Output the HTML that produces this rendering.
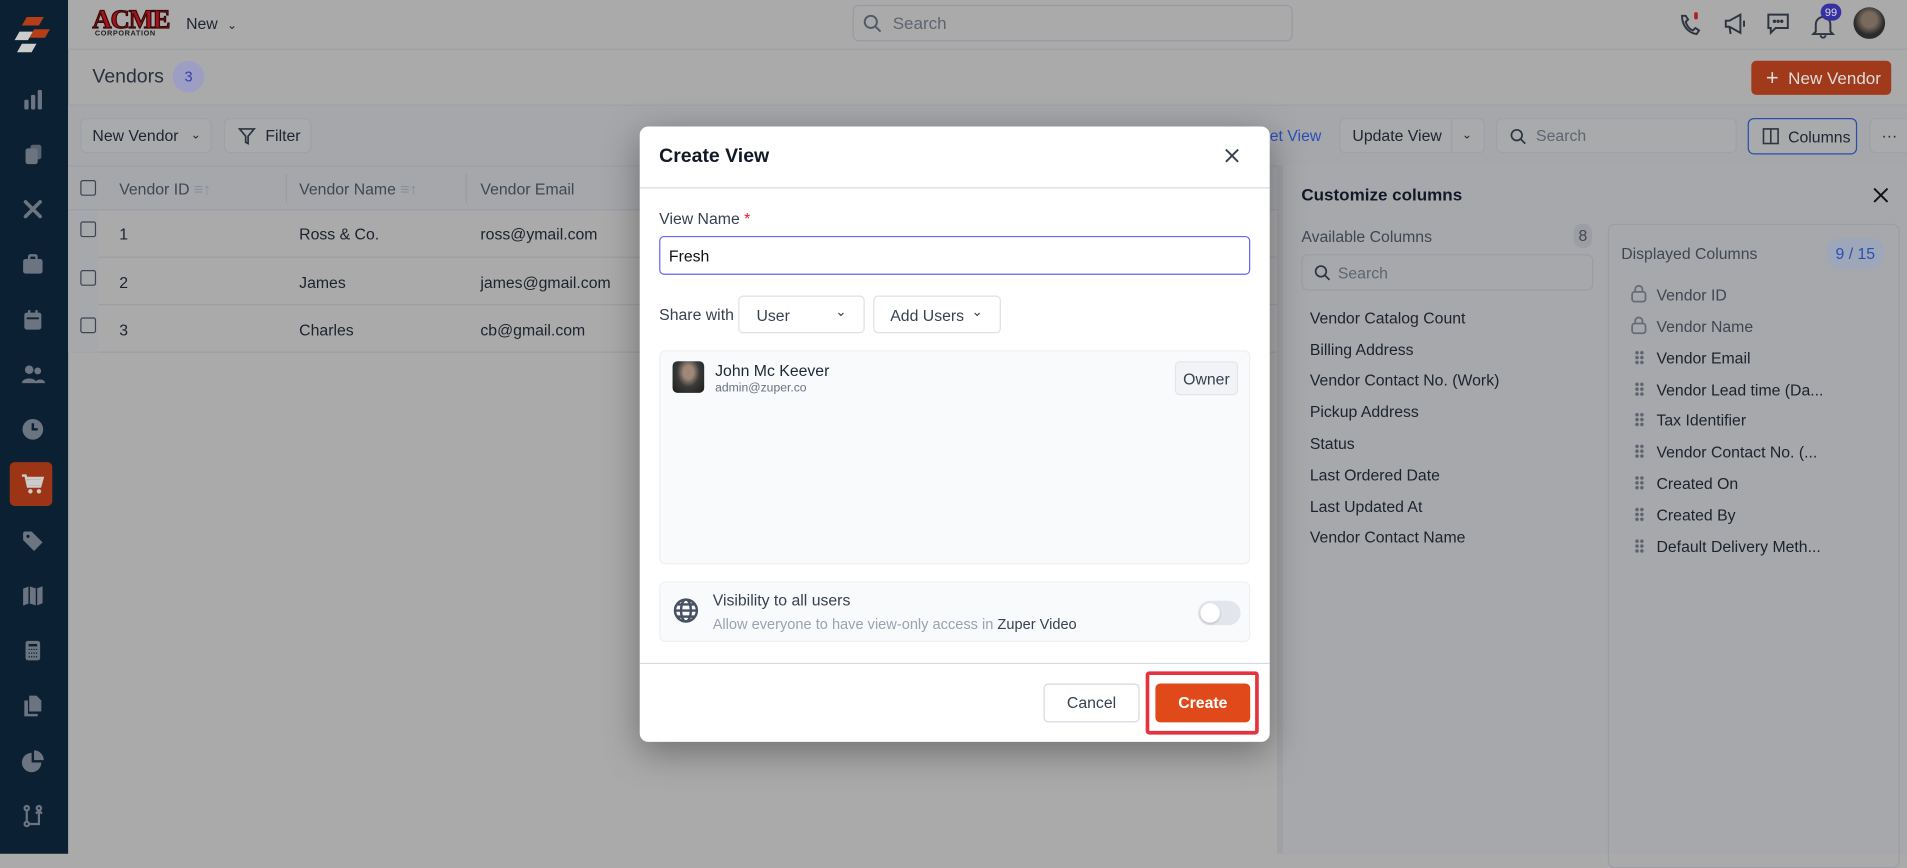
<!DOCTYPE html>
<html><head><meta charset="utf-8">
<style>
*{box-sizing:border-box;margin:0;padding:0}
html,body{width:1907px;height:854px;overflow:hidden;background:#aaaaaa}
body{font-family:"Liberation Sans",sans-serif;color:#1f2a37}
#root{position:absolute;left:0;top:0;width:1568px;height:702px;transform:scale(1.21620);transform-origin:0 0;background:#aaaaaa;font-size:13px}
.a{position:absolute}
.side{left:0;top:0;width:56px;height:702px;background:#0b2133}
.ic{position:absolute;left:17px;width:20px;height:20px}
.btn{position:absolute;border:1px solid #9da1a8;border-radius:5px;background:#a9aaac;color:#1e2530;font-size:13px;display:flex;align-items:center}
.row{position:absolute;left:56px;width:997px;height:39px;border-bottom:1px solid #9b9ea4}
.cb{position:absolute;left:66px;width:13px;height:13px;border:1.5px solid #3e4652;border-radius:2px}
.t{position:absolute;font-size:13px;color:#1c232d;white-space:nowrap}
.modal{left:526px;top:104px;width:518px;height:506px;background:#fff;border-radius:7px;box-shadow:0 8px 30px rgba(0,0,0,.35)}
.m{position:absolute;white-space:nowrap}
.dots{position:absolute;left:1344px;width:8px;height:12px;background:radial-gradient(circle,#5b636f 1.3px,transparent 1.6px) 0 0/4px 4px}
</style></head><body><div id="root">

<!-- sidebar -->
<div class="a side">
  <svg class="a" style="left:10px;top:12px" width="34" height="34" viewBox="0 0 34 34"><path d="M12 2h14l-4 7H8z" fill="#b53d17"/><path d="M18 12h13l-4 7H14z" fill="#b53d17"/><path d="M6 14h11l-4 7H2z" fill="#ccc"/><path d="M8 24h12l-4 7H4z" fill="#ccc"/></svg>
  <svg class="ic" style="top:72px" viewBox="0 0 20 20" fill="#6b7480"><rect x="3" y="10" width="3.5" height="8" rx="1"/><rect x="8.5" y="6" width="3.5" height="12" rx="1"/><rect x="14" y="2" width="3.5" height="16" rx="1"/></svg>
  <svg class="ic" style="top:117px" viewBox="0 0 20 20" fill="#6b7480"><rect x="4" y="5" width="10" height="13" rx="2"/><rect x="8" y="2" width="9" height="12" rx="2" opacity=".8"/></svg>
  <svg class="ic" style="top:162px" viewBox="0 0 20 20" stroke="#6b7480" stroke-width="3" stroke-linecap="round"><path d="M4 4l12 12M16 4L4 16"/></svg>
  <svg class="ic" style="top:207px" viewBox="0 0 20 20" fill="#6b7480"><rect x="2" y="6" width="16" height="12" rx="2"/><rect x="7" y="3" width="6" height="4" rx="1" fill="none" stroke="#6b7480" stroke-width="2"/></svg>
  <svg class="ic" style="top:253px" viewBox="0 0 20 20" fill="#6b7480"><rect x="3" y="4" width="14" height="14" rx="2"/><rect x="6" y="2" width="2" height="4"/><rect x="12" y="2" width="2" height="4"/><rect x="5" y="8" width="10" height="1.5" fill="#0b2133"/></svg>
  <svg class="ic" style="top:298px" viewBox="0 0 20 20" fill="#6b7480"><circle cx="7" cy="6" r="3.5"/><circle cx="14" cy="7" r="2.8"/><path d="M1 17c0-5 12-5 12 0z"/><path d="M12 17c0-4 8-4 8 0z"/></svg>
  <svg class="ic" style="top:343px" viewBox="0 0 20 20"><circle cx="10" cy="10" r="8.5" fill="#6b7480"/><path d="M10 5v5h4" stroke="#0b2133" stroke-width="2" fill="none"/></svg>
  <div class="a" style="left:8px;top:380px;width:35px;height:36px;background:#9b3516;border-radius:4px"></div>
  <svg class="ic" style="top:388px" viewBox="0 0 20 20" fill="#ccc"><path d="M1 3h3l2 9h10l2-7H5" stroke="#ccc" stroke-width="2" fill="none"/><rect x="6" y="6" width="11" height="5"/><circle cx="8" cy="16" r="1.8"/><circle cx="15" cy="16" r="1.8"/></svg>
  <svg class="ic" style="top:435px" viewBox="0 0 20 20" fill="#6b7480"><path d="M2 3v6l9 9 7-7-9-9H3z"/><circle cx="6" cy="6" r="1.3" fill="#0b2133"/></svg>
  <svg class="ic" style="top:480px" viewBox="0 0 20 20" fill="#6b7480"><path d="M2 4l5-2 6 2 5-2v14l-5 2-6-2-5 2z"/><path d="M7 2v14M13 4v14" stroke="#0b2133" stroke-width="1.2"/></svg>
  <svg class="ic" style="top:525px" viewBox="0 0 20 20" fill="#6b7480"><rect x="4" y="2" width="12" height="16" rx="2"/><rect x="6.5" y="4.5" width="7" height="2" fill="#0b2133"/><path d="M6.5 9h7M6.5 12h7M6.5 15h7" stroke="#0b2133" stroke-dasharray="1 1"/></svg>
  <svg class="ic" style="top:570px" viewBox="0 0 20 20" fill="#6b7480"><path d="M7 2h6l4 4v9H7z"/><path d="M3 6h3v11h8v2H3z"/></svg>
  <svg class="ic" style="top:616px" viewBox="0 0 20 20" fill="#6b7480"><path d="M9 3a8 8 0 1 0 8 8H9z"/><path d="M11 1a8 8 0 0 1 8 8h-8z"/></svg>
  <svg class="ic" style="top:661px" viewBox="0 0 20 20" stroke="#6b7480" stroke-width="1.8" fill="none"><circle cx="5" cy="3.5" r="1.8"/><circle cx="5" cy="16.5" r="1.8"/><circle cx="15" cy="3.5" r="1.8"/><path d="M5 5.5v9M7 16.5h8v-11M12.5 8l2.5-2.5 2.5 2.5"/></svg>
</div>

<!-- top bar -->
<div class="a" style="left:56px;top:0;width:1512px;height:41px;border-bottom:1px solid #9c9fa5;background:#aaaaaa"></div>
<div class="a" style="left:76px;top:3px;font-weight:900;font-size:22px;color:#a4141a;letter-spacing:-1px;font-family:'Liberation Serif',serif;-webkit-text-stroke:1px #3a0a0a">ACME</div>
<div class="a" style="left:78px;top:25px;font-size:6px;font-weight:bold;color:#222;letter-spacing:.5px">CORPORATION</div>
<div class="t" style="left:153px;top:12px;color:#1e2530">New <span style="font-size:10px;margin-left:4px">&#8964;</span></div>
<div class="a" style="left:701px;top:4px;width:362px;height:30px;border:1px solid #979ba3;border-radius:5px"></div>
<svg class="a" style="left:709px;top:11px" width="16" height="16" viewBox="0 0 16 16" fill="none" stroke="#525a66" stroke-width="1.6"><circle cx="7" cy="7" r="5"/><path d="M11 11l4 4"/></svg>
<div class="t" style="left:734px;top:11px;color:#5d6571;font-size:14px">Search</div>
<svg class="a" style="left:1380px;top:9px" width="20" height="22" viewBox="0 0 20 22" fill="none" stroke="#2d3540" stroke-width="1.6"><path d="M3 4c0 8 5 14 12 15l2-3-3-2-2 2c-3-1-5-4-6-7l2-2-2-3z"/><rect x="13" y="1" width="3" height="6" rx="1.5" fill="#b02020" stroke="none"/></svg>
<svg class="a" style="left:1416px;top:10px" width="22" height="20" viewBox="0 0 22 20" fill="none" stroke="#2d3540" stroke-width="1.6"><path d="M3 7v5h3l9 5V2L6 7z M6 12l1 6"/><path d="M18 7v5"/></svg>
<svg class="a" style="left:1451px;top:9px" width="22" height="22" viewBox="0 0 22 22" fill="none" stroke="#2d3540" stroke-width="1.6"><path d="M3 3h16v11H9l-4 4v-4H3z"/><circle cx="8" cy="8.5" r=".6" fill="#2d3540"/><circle cx="11" cy="8.5" r=".6" fill="#2d3540"/><circle cx="14" cy="8.5" r=".6" fill="#2d3540"/></svg>
<svg class="a" style="left:1489px;top:10px" width="20" height="22" viewBox="0 0 20 22" fill="none" stroke="#2d3540" stroke-width="1.6"><path d="M4 16V10a6 6 0 0 1 12 0v6l2 2H2z M8 19a2 2 0 0 0 4 0"/></svg>
<div class="a" style="left:1497px;top:3px;width:17px;height:14px;border-radius:8px;background:#3730a3;color:#ddd;font-size:9px;text-align:center;line-height:14px">99</div>
<div class="a" style="left:1524px;top:6px;width:26px;height:26px;border-radius:50%;background:radial-gradient(circle at 50% 40%,#7a6a5e 0 30%,#2b2b2b 60%)"></div>

<!-- page header -->
<div class="t" style="left:76px;top:55px;font-size:16px;color:#2a313c">Vendors</div>
<div class="a" style="left:142px;top:50px;width:26px;height:26px;border-radius:50%;background:#9d9ec4;color:#3a3fa8;text-align:center;line-height:26px;font-size:12px">3</div>
<div class="a" style="left:1440px;top:50px;width:115px;height:28px;border-radius:4px;background:#a13a1a;color:#ddd;font-size:14px;line-height:28px;padding-left:12px"><span style="font-size:18px;vertical-align:-1px">+</span>&nbsp; New Vendor</div>
<div class="a" style="left:56px;top:86px;width:1512px;height:1px;background:#9c9fa5"></div>

<!-- toolbar -->
<div class="a" style="left:56px;top:87px;width:1512px;height:49px;background:#a6a7ab"></div>
<div class="btn" style="left:66px;top:97px;width:108px;height:29px;padding-left:9px">New Vendor <span style="margin-left:10px;font-size:10px">&#8964;</span></div>
<div class="btn" style="left:184px;top:97px;width:72px;height:29px;padding-left:10px"><svg width="16" height="16" viewBox="0 0 16 16" fill="none" stroke="#2d3540" stroke-width="1.4"><path d="M2 2h12l-5 6v6l-2-1V8z"/></svg>&nbsp; Filter</div>
<div class="t" style="left:1044px;top:104px;color:#2a4fb8">et View</div>
<div class="btn" style="left:1101px;top:97px;width:120px;height:29px;padding-left:10px">Update View<span style="position:absolute;left:91px;top:0;width:1px;height:27px;background:#9da1a8"></span><span style="position:absolute;left:100px;font-size:10px">&#8964;</span></div>
<div class="btn" style="left:1230px;top:97px;width:198px;height:29px;padding-left:10px"><svg width="14" height="14" viewBox="0 0 16 16" fill="none" stroke="#2d3540" stroke-width="1.6"><circle cx="7" cy="7" r="5"/><path d="M11 11l4 4"/></svg><span style="margin-left:8px;color:#5d6571">Search</span></div>
<div class="btn" style="left:1437px;top:97px;width:90px;height:30px;border-color:#2c4ea8;padding-left:11px"><svg width="14" height="14" viewBox="0 0 14 14" fill="none" stroke="#2d3540" stroke-width="1.3"><rect x="1" y="1" width="12" height="12"/><path d="M7 1v12"/></svg>&nbsp; Columns</div>
<div class="btn" style="left:1537px;top:97px;width:40px;height:29px;padding-left:9px">&middot;&middot;&middot;</div>

<!-- table -->
<div class="a" style="left:56px;top:136px;width:997px;height:37px;background:#a5a7ab;border-top:1px solid #9b9ea4;border-bottom:1px solid #9b9ea4"></div>
<div class="cb" style="top:148px"></div>
<div class="t" style="left:98px;top:148px;color:#3f4752">Vendor ID <span style="color:#8a909a">&#8801;&#8593;</span></div>
<div class="a" style="left:235px;top:143px;width:1px;height:24px;background:#999ca2"></div>
<div class="t" style="left:246px;top:148px;color:#3f4752">Vendor Name <span style="color:#8a909a">&#8801;&#8593;</span></div>
<div class="a" style="left:383px;top:143px;width:1px;height:24px;background:#999ca2"></div>
<div class="t" style="left:395px;top:148px;color:#3f4752">Vendor Email</div>
<div class="row" style="top:173px"></div><div class="row" style="top:212px"></div><div class="row" style="top:251px"></div>
<div class="a" style="left:56px;top:173px;width:25px;height:117px;background:#a6a8ac"></div>
<div class="cb" style="top:182px"></div><div class="cb" style="top:222px"></div><div class="cb" style="top:261px"></div>
<div class="t" style="left:98px;top:185px">1</div><div class="t" style="left:246px;top:185px">Ross &amp; Co.</div><div class="t" style="left:395px;top:185px">ross@ymail.com</div>
<div class="t" style="left:98px;top:225px">2</div><div class="t" style="left:246px;top:225px">James</div><div class="t" style="left:395px;top:225px">james@gmail.com</div>
<div class="t" style="left:98px;top:264px">3</div><div class="t" style="left:246px;top:264px">Charles</div><div class="t" style="left:395px;top:264px">cb@gmail.com</div>

<!-- right panel -->
<div class="a" style="left:1050px;top:136px;width:518px;height:566px;background:#a7a8ab;border-left:5px solid #9fa1a5"></div>
<div class="t" style="left:1070px;top:152px;font-weight:bold;font-size:14px;color:#111827">Customize columns</div>
<svg class="a" style="left:1540px;top:154px" width="13" height="13" viewBox="0 0 13 13" stroke="#111" stroke-width="1.6"><path d="M1 1l11 11M12 1L1 12"/></svg>
<div class="t" style="left:1070px;top:187px;color:#3f4752">Available Columns</div>
<div class="a" style="left:1294px;top:184px;width:15px;height:20px;border-radius:7px;background:#9c9ea3;text-align:center;line-height:20px;color:#3f4752">8</div>
<div class="a" style="left:1070px;top:209px;width:240px;height:30px;border:1px solid #9a9da3;border-radius:5px"></div>
<svg class="a" style="left:1080px;top:217px" width="14" height="14" viewBox="0 0 16 16" fill="none" stroke="#2d3540" stroke-width="1.6"><circle cx="7" cy="7" r="5"/><path d="M11 11l4 4"/></svg>
<div class="t" style="left:1100px;top:217px;color:#5d6571">Search</div>
<div class="t" style="left:1077px;top:254px">Vendor Catalog Count</div>
<div class="t" style="left:1077px;top:280px">Billing Address</div>
<div class="t" style="left:1077px;top:305px">Vendor Contact No. (Work)</div>
<div class="t" style="left:1077px;top:331px">Pickup Address</div>
<div class="t" style="left:1077px;top:357px">Status</div>
<div class="t" style="left:1077px;top:383px">Last Ordered Date</div>
<div class="t" style="left:1077px;top:409px">Last Updated At</div>
<div class="t" style="left:1077px;top:434px">Vendor Contact Name</div>
<div class="a" style="left:1322px;top:184px;width:240px;height:530px;border:1px solid #9a9da3;border-radius:6px"></div>
<div class="t" style="left:1333px;top:201px;color:#3f4752">Displayed Columns</div>
<div class="a" style="left:1502px;top:196px;width:47px;height:25px;border-radius:10px;background:#9ea6b9;color:#2a4fb8;text-align:center;line-height:25px;font-size:13px">9 / 15</div>
<svg class="a" style="left:1341px;top:234px" width="13" height="15" viewBox="0 0 13 15" fill="none" stroke="#666d78" stroke-width="1.5"><rect x="1" y="6" width="11" height="8" rx="2"/><path d="M3.5 6V4a3 3 0 0 1 6 0v2"/></svg>
<svg class="a" style="left:1341px;top:260px" width="13" height="15" viewBox="0 0 13 15" fill="none" stroke="#666d78" stroke-width="1.5"><rect x="1" y="6" width="11" height="8" rx="2"/><path d="M3.5 6V4a3 3 0 0 1 6 0v2"/></svg>
<div class="t" style="left:1362px;top:235px;color:#3f4752">Vendor ID</div>
<div class="t" style="left:1362px;top:261px;color:#3f4752">Vendor Name</div>
<div class="dots" style="top:288px"></div><div class="t" style="left:1362px;top:287px">Vendor Email</div>
<div class="dots" style="top:314px"></div><div class="t" style="left:1362px;top:313px">Vendor Lead time (Da...</div>
<div class="dots" style="top:339px"></div><div class="t" style="left:1362px;top:338px">Tax Identifier</div>
<div class="dots" style="top:365px"></div><div class="t" style="left:1362px;top:364px">Vendor Contact No. (...</div>
<div class="dots" style="top:391px"></div><div class="t" style="left:1362px;top:390px">Created On</div>
<div class="dots" style="top:417px"></div><div class="t" style="left:1362px;top:416px">Created By</div>
<div class="dots" style="top:443px"></div><div class="t" style="left:1362px;top:442px">Default Delivery Meth...</div>

<!-- modal -->
<div class="a modal">
  <div class="m" style="left:16px;top:16px;font-size:16px;font-weight:bold;color:#111827">Create View</div>
  <svg class="m" style="left:481px;top:18px" width="12" height="12" viewBox="0 0 12 12" stroke="#374151" stroke-width="1.6"><path d="M1 1l10 10M11 1L1 11"/></svg>
  <div class="m" style="left:0;top:50px;width:518px;height:1px;background:#d7dbe0"></div>
  <div class="m" style="left:16px;top:68px;font-size:13px;color:#374151">View Name <span style="color:#e11d2e">*</span></div>
  <div class="m" style="left:16px;top:90px;width:486px;height:32px;border:1px solid #6366f1;border-radius:4px;padding:8px 7px;font-size:13px;color:#111">Fresh</div>
  <div class="m" style="left:16px;top:147px;font-size:13px;color:#374151">Share with</div>
  <div class="m" style="left:81px;top:139px;width:104px;height:31px;border:1px solid #dde1e6;border-radius:4px;padding:8px 14px;font-size:13px;color:#374151">User<span style="position:absolute;right:14px;top:6px;font-size:11px">&#8964;</span></div>
  <div class="m" style="left:192px;top:139px;width:105px;height:31px;border:1px solid #dde1e6;border-radius:4px;padding:8px 13px;font-size:13px;color:#374151">Add Users<span style="position:absolute;right:14px;top:6px;font-size:11px">&#8964;</span></div>
  <div class="m" style="left:16px;top:184px;width:486px;height:176px;background:#f8fafc;border:1px solid #eef0f3;border-radius:5px"></div>
  <div class="m" style="left:27px;top:193px;width:26px;height:26px;border-radius:4px;background:radial-gradient(ellipse at 50% 35%,#a08878 0 22%,#3a3a3a 50%,#1a1a1a)"></div>
  <div class="m" style="left:62px;top:193px;font-size:13px;color:#1f2937">John Mc Keever</div>
  <div class="m" style="left:62px;top:210px;font-size:10px;color:#6b7280">admin@zuper.co</div>
  <div class="m" style="left:440px;top:193px;width:52px;height:28px;border:1px solid #e2e6eb;border-radius:4px;background:#f1f3f6;font-size:13px;color:#374151;text-align:center;line-height:27px">Owner</div>
  <div class="m" style="left:16px;top:374px;width:486px;height:50px;background:#f8fafc;border:1px solid #eef0f3;border-radius:5px"></div>
  <svg class="m" style="left:27px;top:387px" width="22" height="22" viewBox="0 0 22 22" fill="none" stroke="#475162" stroke-width="2"><circle cx="11" cy="11" r="9"/><ellipse cx="11" cy="11" rx="4" ry="9"/><path d="M2 11h18M4 6h14M4 16h14"/></svg>
  <div class="m" style="left:60px;top:382px;font-size:13px;color:#374151">Visibility to all users</div>
  <div class="m" style="left:60px;top:402px;font-size:12px;color:#9aa3b2">Allow everyone to have view-only access in <span style="color:#374151">Zuper Video</span></div>
  <div class="m" style="left:459px;top:390px;width:35px;height:20px;border-radius:10px;background:#e2e6ec"><div style="position:absolute;left:2px;top:2px;width:16px;height:16px;border-radius:50%;background:#fff;box-shadow:0 1px 2px rgba(0,0,0,.2)"></div></div>
  <div class="m" style="left:0;top:441px;width:518px;height:1px;background:#d7dbe0"></div>
  <div class="m" style="left:332px;top:458px;width:79px;height:32px;border:1px solid #d4d9e0;border-radius:4px;text-align:center;line-height:30px;font-size:13px;color:#374151">Cancel</div>
  <div class="m" style="left:416px;top:448px;width:93px;height:52px;border:3px solid #e5323e;border-radius:3px"></div>
  <div class="m" style="left:424px;top:458px;width:78px;height:32px;border-radius:4px;background:#e04a1a;color:#fff;font-weight:bold;text-align:center;line-height:32px;font-size:13px">Create</div>
</div>

</div></body></html>
